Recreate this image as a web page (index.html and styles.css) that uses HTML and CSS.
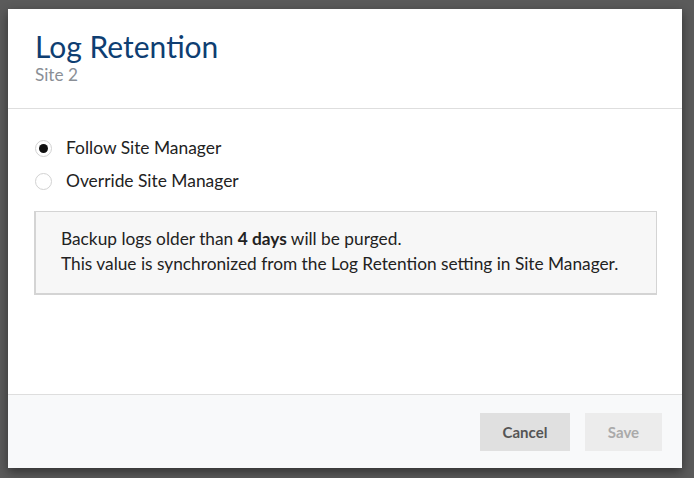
FILE: index.html
```html
<!DOCTYPE html>
<html>
<head>
<meta charset="utf-8">
<link rel="stylesheet" href="styles.css">
</head>
<body>
<div class="dialog">
  <div class="header">
    <div class="title">Log Retention</div>
    <div class="subtitle">Site 2</div>
  </div>
  <div class="body">
    <div class="options">
      <label class="option"><span class="radio checked"></span><span>Follow Site Manager</span></label>
      <label class="option"><span class="radio"></span><span>Override Site Manager</span></label>
    </div>
    <div class="info">
      <div>Backup logs older than <b>4 days</b> will be purged.</div>
      <div>This value is synchronized from the Log Retention setting in Site Manager.</div>
    </div>
  </div>
  <div class="footer">
    <button class="btn cancel">Cancel</button>
    <button class="btn save">Save</button>
  </div>
</div>
</body>
</html>
```
FILE: styles.css
```css
html, body {
  margin: 0;
  height: 100%;
}
body {
  background: #5b5b5b;
  font-family: Lato, "Open Sans", sans-serif;
  padding: 9px 12px 10px 8px;
  box-sizing: border-box;
}
.dialog {
  background: #fff;
  height: 459px;
  width: 674px;
  display: flex;
  flex-direction: column;
  box-shadow: 0 4px 10px rgba(0,0,0,0.45);
}
.header {
  padding: 19px 27px 23px;
  border-bottom: 1px solid #dedede;
}
.title {
  font-size: 30px;
  line-height: 36px;
  color: #0e3e72;
}
.subtitle {
  margin-top: 1px;
  font-size: 17.2px;
  line-height: 20px;
  color: #8a8f96;
}
.body {
  flex: 1;
  padding: 29px 25px 0 26px;
}
.options {
  display: flex;
  flex-direction: column;
  gap: 13px;
}
.option {
  display: flex;
  align-items: center;
  gap: 14px;
  font-size: 17.4px;
  line-height: 20px;
  color: #222;
}
.radio {
  width: 17px;
  height: 17px;
  border: 1px solid #d2d2d2;
  border-radius: 50%;
  box-sizing: border-box;
  display: flex;
  align-items: center;
  justify-content: center;
  margin-left: 1px;
}
.radio.checked::after {
  content: "";
  width: 9px;
  height: 9px;
  border-radius: 50%;
  background: #111;
}
.info {
  margin-top: 20px;
  background: #f7f7f7;
  border: 1px solid #d4d4d4;
  border-left-width: 2px;
  border-bottom-width: 2px;
  padding: 14px 25px 17px 25px;
  font-size: 17.3px;
  line-height: 25px;
  color: #222;
}
.footer {
  border-top: 1px solid #dedede;
  background: #f8f9fa;
  padding: 18px 20px 17px;
  display: flex;
  justify-content: flex-end;
  gap: 15px;
}
.btn {
  font-family: Lato, "Open Sans", sans-serif;
  font-weight: bold;
  font-size: 15px;
  height: 38px;
  border: none;
  border-radius: 0;
}
.cancel {
  width: 90px;
  background: #e0e0e0;
  color: #555;
}
.save {
  width: 77px;
  background: #ececec;
  color: #aaa;
}
```
